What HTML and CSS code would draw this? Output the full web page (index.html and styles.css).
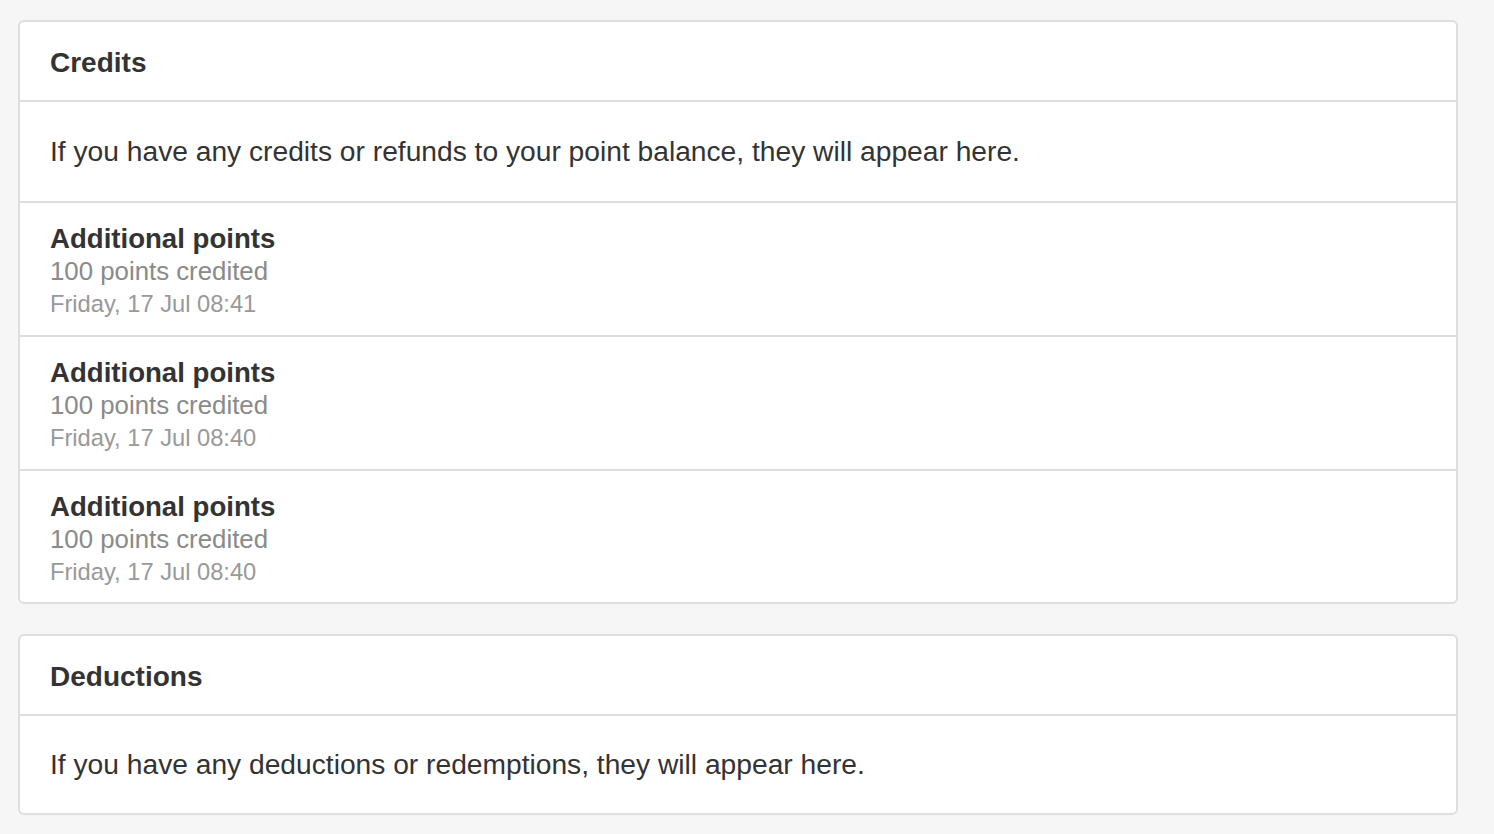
FILE: index.html
```html
<!DOCTYPE html>
<html lang="en">
<head>
<meta charset="utf-8">
<title>Points history</title>
<link rel="stylesheet" href="styles.css">
</head>
<body>
<main class="page">
  <section class="card">
    <header class="card-header">Credits</header>
    <div class="card-row desc">If you have any credits or refunds to your point balance, they will appear here.</div>
    <div class="card-row item">
      <div class="item-title">Additional points</div>
      <div class="item-sub">100 points credited</div>
      <div class="item-date">Friday, 17 Jul 08:41</div>
    </div>
    <div class="card-row item">
      <div class="item-title">Additional points</div>
      <div class="item-sub">100 points credited</div>
      <div class="item-date">Friday, 17 Jul 08:40</div>
    </div>
    <div class="card-row item">
      <div class="item-title">Additional points</div>
      <div class="item-sub">100 points credited</div>
      <div class="item-date">Friday, 17 Jul 08:40</div>
    </div>
  </section>
  <section class="card">
    <header class="card-header">Deductions</header>
    <div class="card-row desc">If you have any deductions or redemptions, they will appear here.</div>
  </section>
</main>
</body>
</html>
```
FILE: styles.css
```css
html, body {
  margin: 0;
  padding: 0;
  background: #f6f6f6;
}
body {
  font-family: "Liberation Sans", Arial, Helvetica, sans-serif;
  color: #333;
}
.page {
  display: flex;
  flex-direction: column;
  gap: 30px;
  padding: 20px 36px 0 18px;
}
.card {
  background: #fff;
  border: 2px solid #dedede;
  border-radius: 6px;
  display: flex;
  flex-direction: column;
}
.card-header {
  height: 80px;
  box-sizing: border-box;
  display: flex;
  align-items: center;
  padding: 3px 30px 0;
  font-size: 28px;
  font-weight: bold;
  border-bottom: 2px solid #dedede;
}
.card-row {
  padding: 0 30px;
  border-bottom: 2px solid #dedede;
}
.card-row:last-child {
  border-bottom: none;
}
.desc {
  height: 99px;
  display: flex;
  align-items: center;
  font-size: 28.2px;
}
.card-row.desc:last-child {
  height: 97px;
}
.item {
  height: 131px;
  box-sizing: border-box;
  padding-top: 19px;
  display: flex;
  flex-direction: column;
  justify-content: flex-start;
}
.item:not(:last-child) {
  height: 134px;
}
.item-title {
  font-size: 27.6px;
  font-weight: bold;
  line-height: 33px;
}
.item-sub {
  font-size: 25.8px;
  color: #8a8a8a;
  line-height: 33px;
}
.item-date {
  font-size: 23.7px;
  color: #999;
  line-height: 32px;
}
```
